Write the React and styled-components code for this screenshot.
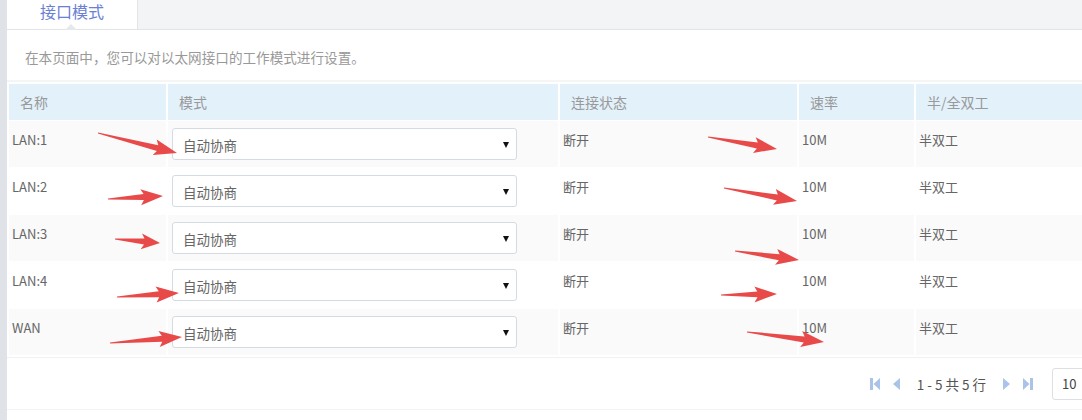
import React from 'react';
import styled, { createGlobalStyle } from 'styled-components';

const GlobalStyle = createGlobalStyle`
  html, body {
    margin: 0;
    padding: 0;
    background: #dfe3e8;
  }
  body {
    font-family: "Noto Sans CJK SC", "Noto Sans", sans-serif;
    color: #666;
  }
`;

const Page = styled.div`
  position: relative;
  margin-left: 7px;
  min-height: 420px;
  background: #fff;
  overflow: hidden;
`;

const TabBar = styled.div`
  display: flex;
  height: 29px;
  background: #f3f4f6;
  border-bottom: 1px solid #e2e4e7;
`;

const Tab = styled.div`
  position: relative;
  width: 130px;
  background: #fff;
  border-right: 1px solid #e2e4e7;
  color: #6a80d4;
  font-size: 16px;
  line-height: 22px;
  text-align: center;

  &::after {
    content: '';
    position: absolute;
    left: 58px;
    bottom: -1px;
    border: 6px solid transparent;
    border-bottom-color: #e6e8eb;
    border-top-width: 0;
  }
`;

const Intro = styled.p`
  margin: 0;
  padding: 17px 18px 0;
  height: 33px;
  font-size: 13.6px;
  color: #999;
  border-bottom: 2px solid #f4f5f6;
`;

const Table = styled.div`
  margin: 2px 0 0 2px;
  display: grid;
  grid-template-columns: 157px 390px 237px 115px 1fr;
  column-gap: 2px;
  row-gap: 1px;
`;

const HeadCell = styled.div`
  height: 36px;
  background: #e3f1fb;
  color: #999;
  font-size: 14px;
  line-height: 36px;
  padding-left: 11px;
`;

const Cell = styled.div`
  height: 46px;
  box-sizing: border-box;
  padding: ${(p) => (p.$select ? '7px 0 0 4px' : '10px 0 0 3px')};
  background: ${(p) => (p.$odd ? '#fafafa' : '#fff')};
  font-size: 13px;
  line-height: 18px;
  color: #666;
`;

const Select = styled.div`
  display: flex;
  align-items: center;
  justify-content: space-between;
  width: 345px;
  height: 32px;
  box-sizing: border-box;
  padding: 1px 7px 0 10px;
  border: 1px solid #d5dbe3;
  border-radius: 3px;
  background: #fff;
  font-size: 13.5px;
  color: #666;
`;

const Caret = styled.span`
  width: 0;
  height: 0;
  border-left: 3.5px solid transparent;
  border-right: 3.5px solid transparent;
  border-top: 6px solid #111;
`;

const Footer = styled.div`
  display: flex;
  align-items: center;
  justify-content: flex-end;
  gap: 18px;
  height: 51px;
  margin-top: 2px;
  border-top: 1px solid #f0f1f2;
  border-bottom: 1px solid #f2f3f4;
`;

const Pager = styled.div`
  display: flex;
  align-items: center;
  gap: 11px;
  font-size: 13.5px;
  color: #555;
`;

const PagerInfo = styled.span`
  padding: 0 5px;
  white-space: pre;
`;

const SizeBox = styled.div`
  width: 40px;
  height: 32px;
  box-sizing: border-box;
  margin-right: -10px;
  padding-left: 9px;
  border: 1px solid #dcdfe3;
  border-radius: 3px;
  font-size: 13px;
  line-height: 30px;
  color: #444;
`;

const Overlay = styled.svg`
  position: absolute;
  left: -7px;
  top: 0;
  pointer-events: none;
`;

const PagerIcon = ({ kind }) => {
  const fill = '#a9c3e9';
  const flip = kind === 'next' || kind === 'last';
  const bar = kind === 'first' || kind === 'last';
  const w = bar ? 12 : 9;
  return (
    <svg width={w} height="14" viewBox={`0 0 ${w} 14`}>
      <g transform={flip ? `translate(${w} 0) scale(-1 1)` : undefined} fill={fill}>
        {bar && <rect x="1" y="1" width="3" height="12" />}
        <path d={bar ? 'M11 1 L4.5 7 L11 13 Z' : 'M8 1 L1 7 L8 13 Z'} />
      </g>
    </svg>
  );
};

const arrowPoints = ([x1, y1], [x2, y2]) => {
  const dx = x2 - x1;
  const dy = y2 - y1;
  const len = Math.hypot(dx, dy);
  const ux = dx / len;
  const uy = dy / len;
  const nx = -uy;
  const ny = ux;
  const head = Math.min(20, len * 0.35);
  const neckX = x2 - ux * head;
  const neckY = y2 - uy * head;
  const barbX = x2 - ux * (head + 3);
  const barbY = y2 - uy * (head + 3);
  const pts = [
    [x1 + nx * 0.6, y1 + ny * 0.6],
    [neckX + nx * 3, neckY + ny * 3],
    [barbX + nx * 8, barbY + ny * 8],
    [x2, y2],
    [barbX - nx * 8, barbY - ny * 8],
    [neckX - nx * 3, neckY - ny * 3],
    [x1 - nx * 0.6, y1 - ny * 0.6],
  ];
  return pts.map((p) => p.map((v) => v.toFixed(1)).join(',')).join(' ');
};

const arrows = [
  [[98, 133], [177, 153]],
  [[108, 199], [163, 196]],
  [[115, 239], [160, 243]],
  [[117, 297], [179, 293]],
  [[110, 343], [182, 337]],
  [[708, 137], [777, 149]],
  [[724, 188], [797, 201]],
  [[735, 251], [799, 260]],
  [[721, 295], [777, 294]],
  [[747, 332], [824, 342]],
];

const headers = ['名称', '模式', '连接状态', '速率', '半/全双工'];

const ports = ['LAN:1', 'LAN:2', 'LAN:3', 'LAN:4', 'WAN'].map((name) => ({
  name,
  mode: '自动协商',
  status: '断开',
  speed: '10M',
  duplex: '半双工',
}));

export default function App() {
  return (
    <>
      <GlobalStyle />
      <Page>
        <TabBar>
          <Tab>接口模式</Tab>
        </TabBar>
        <Intro>在本页面中，您可以对以太网接口的工作模式进行设置。</Intro>
        <Table>
          {headers.map((h) => (
            <HeadCell key={h}>{h}</HeadCell>
          ))}
          {ports.map((p, i) => {
            const odd = i % 2 === 0;
            return (
              <React.Fragment key={p.name}>
                <Cell $odd={odd}>{p.name}</Cell>
                <Cell $odd={odd} $select>
                  <Select>
                    {p.mode}
                    <Caret />
                  </Select>
                </Cell>
                <Cell $odd={odd}>{p.status}</Cell>
                <Cell $odd={odd}>{p.speed}</Cell>
                <Cell $odd={odd}>{p.duplex}</Cell>
              </React.Fragment>
            );
          })}
        </Table>
        <Footer>
          <Pager>
            <PagerIcon kind="first" />
            <PagerIcon kind="prev" />
            <PagerInfo>1 - 5 共 5 行</PagerInfo>
            <PagerIcon kind="next" />
            <PagerIcon kind="last" />
          </Pager>
          <SizeBox>10</SizeBox>
        </Footer>
        <Overlay width="1082" height="420" viewBox="0 0 1082 420">
          {arrows.map(([a, b], i) => (
            <polygon key={i} points={arrowPoints(a, b)} fill="#e84a4a" />
          ))}
        </Overlay>
      </Page>
    </>
  );
}
